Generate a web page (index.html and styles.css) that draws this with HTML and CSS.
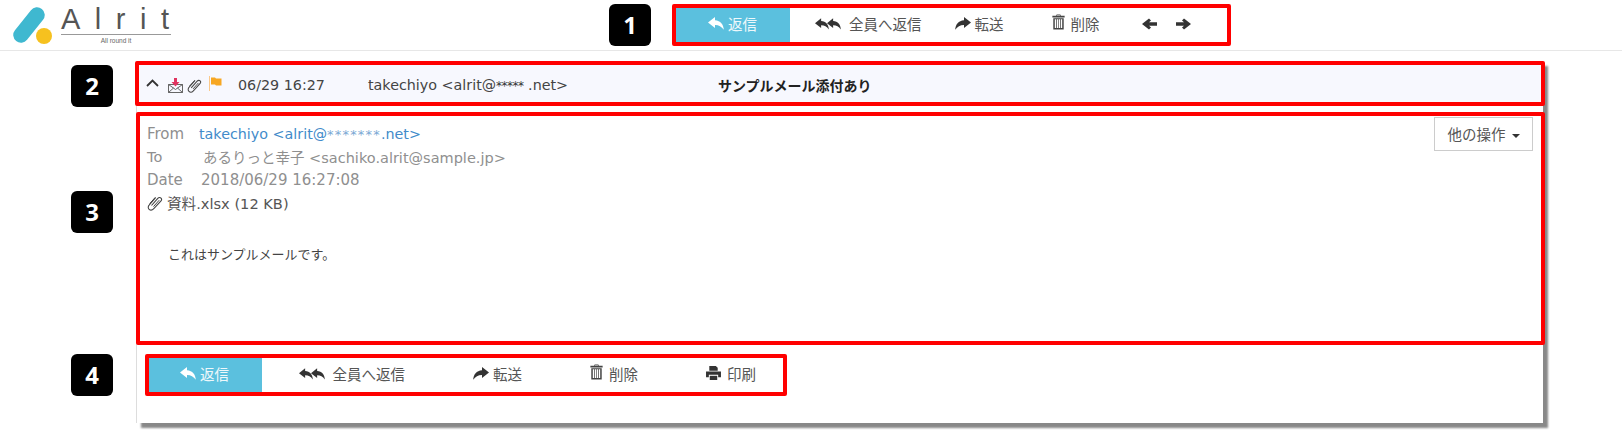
FILE: index.html
```html
<!DOCTYPE html>
<html lang="ja">
<head>
<meta charset="utf-8">
<title>Alrit</title>
<link rel="stylesheet" href="styles.css">
</head>
<body>
<svg class="defs" width="0" height="0" aria-hidden="true">
  <symbol id="i-reply" viewBox="0 0 16 13">
    <path d="M7 0 0 5.600 7 11V7.900C10.500 7.800 13.500 9.200 15.800 12.800 15.600 7.400 12.500 3.600 7 3.200z"/>
  </symbol>
  <symbol id="i-trash" viewBox="0 0 14 16">
    <path d="M5 0h4l.6 1.400H13.600v1.800H.4V1.400H4.400zM5.400 .9l-.3.6h3.800l-.3-.6z" fill-rule="evenodd"/>
    <path d="M1.400 4h11.200v12H1.400zM3 5v9.500h1.400V5zM5.200 5v9.500h1.500V5zM7.400 5v9.500h1.400V5zM9.600 5v9.500H11V5z" fill-rule="evenodd"/>
  </symbol>
  <symbol id="i-print" viewBox="0 0 16 15">
    <path d="M3.500 0h7l2 2v3.200h-9zM0 6h16v6h-3v-2.500H3V12H0z"/>
    <path d="M4 10.500h8V15H4z"/>
  </symbol>
  <symbol id="i-clip" viewBox="0 0 16 16">
    <path d="M4.500 10.500 10.800 3.400c1-1.100 2.400-1.100 3.200-.3.800.8.700 2-.2 3L6.800 13.700c-1.500 1.600-3.500 1.700-4.700.6-1.200-1.100-1.200-3 .2-4.500L8.600 2.700" fill="none" stroke="currentColor" stroke-width="1.100"/>
    <path d="M6.500 11.600 12.200 5.200M2.800 8.500 8.300 2.400" fill="none" stroke="currentColor" stroke-width="1"/>
  </symbol>
</svg>

<header class="topbar">
  <div class="logo">
    <svg class="logo-mark" viewBox="0 0 40 38">
      <path d="M8 28 24 8" fill="none" stroke="#3fb8d0" stroke-width="15.500" stroke-linecap="round"/>
      <circle cx="31" cy="29" r="8" fill="#f6c11f"/>
    </svg>
    <div class="logo-text">
      <div class="logo-name">Alrit</div>
      <div class="logo-tag">All round it</div>
    </div>
  </div>
  <nav class="annot toolbar toolbar-top">
    <a class="btn btn-primary"><svg class="ic ic-reply"><use href="#i-reply"/></svg>返信</a>
    <a class="btn btn-all"><svg class="ic ic-reply-one"><use href="#i-reply"/></svg><svg class="ic ic-reply-two"><use href="#i-reply"/></svg>全員へ返信</a>
    <a class="btn btn-fwd"><svg class="ic ic-reply ic-flip"><use href="#i-reply"/></svg>転送</a>
    <a class="btn btn-del"><svg class="ic ic-trash"><use href="#i-trash"/></svg>削除</a>
    <a class="btn btn-prev"><svg class="ic ic-arrow" viewBox="0 0 15 12"><path d="M7 .5 9 2.500 7 4.200h8v3.600H7L9 9.500 7 11.500 0 6z"/></svg></a>
    <a class="btn btn-next"><svg class="ic ic-arrow" viewBox="0 0 15 12"><path d="M8 .5 6 2.500 8 4.200H0v3.600h8L6 9.500 8 11.500 15 6z"/></svg></a>
  </nav>
</header>

<main class="panel">
  <section class="annot annot-bar">
    <div class="mail-bar">
      <svg class="bar-chevron" viewBox="0 0 13 8"><path d="M1 7 6.500 1.500 12 7" fill="none" stroke="#333" stroke-width="1.800"/></svg>
      <svg class="bar-env" viewBox="0 0 15 15">
        <path d="M.5 6.500h14v8H.500zM.5 6.500 7.500 11.500 14.500 6.500M.5 14.500 5.500 10M14.500 14.500 9.500 10" fill="none" stroke="#555" stroke-width=".9"/>
        <path d="M6 0h3v4h2.500L7.500 8.500 3.500 4H6z" fill="#e0335f"/>
      </svg>
      <svg class="bar-clip"><use href="#i-clip"/></svg>
      <svg class="bar-flag" viewBox="0 0 13 15">
        <path d="M.5 0v15" stroke="#fbc98a" stroke-width="1"/>
        <path d="M2 1.500h4l1 1h5.500v7H7l-1-1H2z" fill="#f7a723"/>
      </svg>
      <span class="bar-date">06/29 16:27</span>
      <span class="bar-from">takechiyo &lt;alrit@<span class="mask">*****</span> .net&gt;</span>
      <strong class="bar-subject">サンプルメール添付あり</strong>
    </div>
  </section>

  <section class="annot annot-mail">
    <div class="mail-head">
      <div class="mail-meta">
        <div class="meta-row"><span class="meta-label">From</span><a class="meta-link">takechiyo &lt;alrit@<span class="mask-thin">*******</span>.net&gt;</a></div>
        <div class="meta-row meta-row-to"><span class="meta-label meta-label-to">To</span><span>あるりっと幸子 &lt;sachiko.alrit@sample.jp&gt;</span></div>
        <div class="meta-row"><span class="meta-label meta-label-date">Date</span><span>2018/06/29 16:27:08</span></div>
        <div class="meta-row attach"><svg class="attach-clip"><use href="#i-clip"/></svg>資料.xlsx (12 KB)</div>
      </div>
      <button class="more">他の操作<span class="caret"></span></button>
    </div>
    <p class="mail-body">これはサンプルメールです。</p>
  </section>

  <nav class="annot toolbar toolbar-bottom">
    <a class="btn btn-primary"><svg class="ic ic-reply"><use href="#i-reply"/></svg>返信</a>
    <a class="btn"><svg class="ic ic-reply-one"><use href="#i-reply"/></svg><svg class="ic ic-reply-two"><use href="#i-reply"/></svg>全員へ返信</a>
    <a class="btn"><svg class="ic ic-reply ic-flip"><use href="#i-reply"/></svg>転送</a>
    <a class="btn"><svg class="ic ic-trash"><use href="#i-trash"/></svg>削除</a>
    <a class="btn"><svg class="ic ic-print"><use href="#i-print"/></svg>印刷</a>
  </nav>
</main>

<div class="badge badge-1">1</div>
<div class="badge badge-2">2</div>
<div class="badge badge-3">3</div>
<div class="badge badge-4">4</div>
</body>
</html>
```

FILE: styles.css
```css
* { box-sizing: border-box; }

html, body { margin: 0; padding: 0; }

body {
  position: relative;
  height: 447px;
  overflow: hidden;
  background: #fff;
  font-family: "DejaVu Sans", "Noto Sans CJK JP", sans-serif;
  color: #555;
}

.defs { position: absolute; }

.topbar {
  display: flex;
  height: 51px;
  border-bottom: 1px solid #e7e7e7;
  padding-top: 4px;
}

.logo {
  display: flex;
  width: 672px;
  height: 44px;
  padding: 3px 0 0 13px;
}

.logo-mark { width: 40px; height: 38px; }

.logo-text { width: 110px; margin-left: 8px; }

.logo-name {
  height: 28px;
  border-bottom: 1px solid #999;
  font: 29px/25px "Liberation Sans", sans-serif;
  letter-spacing: 14.500px;
  color: #555;
  white-space: nowrap;
}

.logo-tag {
  font: 6.500px/9px "Liberation Sans", sans-serif;
  color: #666;
  text-align: center;
  margin-top: 1px;
}

.annot { border: 4px solid #f00; border-radius: 2px; }

.toolbar {
  display: flex;
  align-items: stretch;
  background: #fff;
  font-size: 14.500px;
}

.toolbar-top { width: 559px; height: 42px; }

.toolbar-bottom {
  width: 642px;
  height: 42px;
  margin: 9px 0 0 8px;
}

.btn {
  display: flex;
  flex: none;
  align-items: center;
  padding: 0 34px 3px;
  color: #555;
  white-space: nowrap;
}

.btn-primary {
  width: 114px;
  padding: 0 0 3px 32px;
  background: #5bc0de;
  color: #eef8fb;
}

.toolbar-bottom .btn-primary {
  width: 113px;
  margin-right: 2.500px;
  padding-left: 31px;
}

.btn-all { padding: 0 0 3px 25px; }
.btn-fwd { padding: 0 0 3px 33px; }
.btn-del { padding: 0 0 3px 48px; }
.btn-prev { padding: 0 0 3px 42px; }
.btn-next { padding: 0 0 3px 19px; }

.ic { fill: #333; flex: none; }
.btn-primary .ic { fill: #fff; }

.ic-reply { width: 16px; height: 13px; margin-right: 4px; }
.ic-reply-one { width: 14px; height: 12px; margin-right: -2px; }
.ic-reply-two { width: 14px; height: 12px; margin-right: 8px; }
.ic-flip { transform: scaleX(-1); }
.ic-trash { width: 13px; height: 16px; margin: -3px 6px 0 0; fill: #444; }
.ic-print { width: 15px; height: 14px; margin: -2px 6px 0 0; }
.ic-arrow { width: 15px; height: 12px; }

.panel {
  width: 1407px;
  height: 362px;
  margin: 10px 0 0 136px;
  border-left: 1px solid #ddd;
  background: #fff;
  box-shadow: 5px 5px 2px #888;
}

.annot-bar {
  width: 1410px;
  height: 45px;
  margin: 0 0 0 -2px;
}

.mail-bar {
  display: flex;
  align-items: center;
  height: 37px;
  padding: 3px 0 0 7px;
  background: #f7f8fe;
  font-size: 14.300px;
  color: #444;
}

.bar-chevron { width: 13px; height: 8px; margin: -5px 9px 0 0; }
.bar-env { width: 15px; height: 15px; }
.bar-clip { width: 15px; height: 15px; margin-left: 4px; color: #444; }
.bar-flag { width: 13px; height: 15px; margin: -3px 0 0 7px; }
.bar-date { width: 130px; margin-left: 16px; }
.bar-from { width: 350px; }
.mask { font-size: 12px; letter-spacing: -.5px; color: #333; }
.bar-subject { font-size: 14px; color: #222; font-family: "Noto Sans CJK JP", sans-serif; }

.annot-mail {
  width: 1409px;
  height: 233px;
  margin: 6px 0 0 -1px;
}

.mail-head { display: flex; justify-content: space-between; padding: 1px 8px 0 7px; }

.mail-meta { padding-top: 5px; font-size: 15px; color: #8f8f8f; }

.meta-row { display: flex; align-items: center; height: 23px; white-space: nowrap; }
.meta-row-to { font-size: 14.500px; }

.meta-label { width: 52px; }
.meta-label-to { width: 56px; }
.meta-label-date { width: 54px; }

.meta-link { color: #428bca; font-size: 14.300px; }
.mask-thin { font-size: 13px; letter-spacing: 1.200px; color: #7aa8d4; }

.attach { color: #555; font-size: 14.600px; }
.attach-clip { width: 16px; height: 16px; margin-right: 4px; color: #444; }

.more {
  width: 99px;
  height: 34px;
  padding: 0 0 2px;
  border: 1px solid #ccc;
  background: #fff;
  font: 14.500px "Noto Sans CJK JP", sans-serif;
  color: #555;
}

.caret {
  display: inline-block;
  margin-left: 6px;
  vertical-align: middle;
  border-top: 4px solid #333;
  border-left: 4px solid transparent;
  border-right: 4px solid transparent;
}

.mail-body {
  margin: 28px 0 0 28px;
  font: 13px/23px "Noto Sans CJK JP", sans-serif;
  color: #444;
}

.badge {
  position: absolute;
  width: 42px;
  height: 42px;
  border-radius: 6px;
  background: #000;
  color: #fff;
  font: bold 24px/42px "Noto Sans", sans-serif;
  text-align: center;
}

.badge-1 { left: 609px; top: 4px; }
.badge-2 { left: 71px; top: 65px; }
.badge-3 { left: 71px; top: 191px; }
.badge-4 { left: 71px; top: 354px; }
```
